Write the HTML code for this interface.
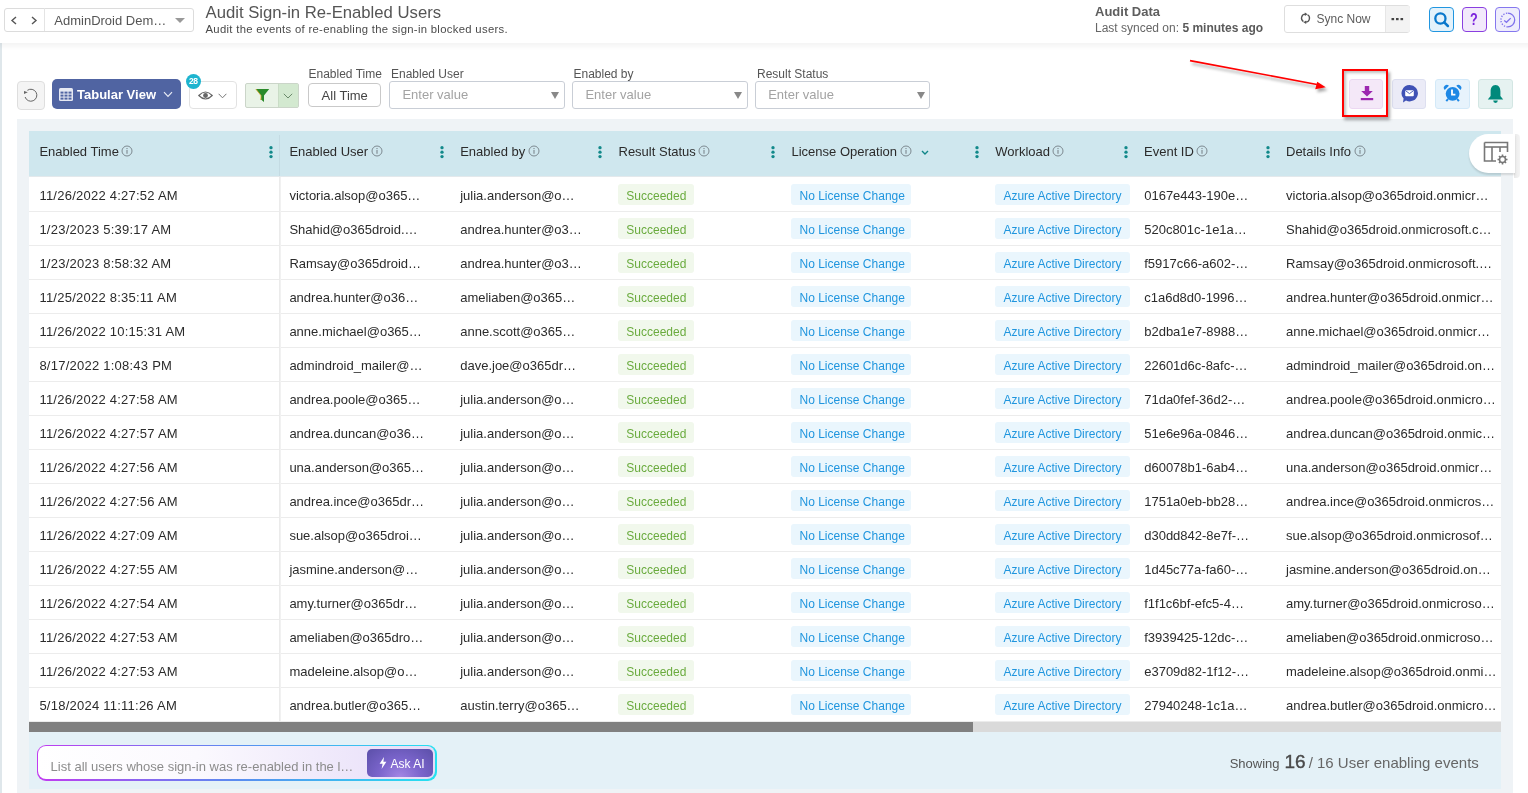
<!DOCTYPE html>
<html><head><meta charset="utf-8"><title>Audit Sign-in Re-Enabled Users</title>
<style>
html,body{margin:0;padding:0;width:1528px;height:793px;overflow:hidden;background:#fff;font-family:"Liberation Sans",sans-serif;}
.a{position:absolute;}
.t{position:absolute;white-space:nowrap;}
</style></head><body><div id="root" style="position:absolute;left:0;top:0;width:1528px;height:793px;will-change:transform">
<div class="a" style="left:0px;top:0px;width:1528px;height:43px;background:#fff;z-index:2"></div>
<div class="a" style="left:0px;top:43px;width:1528px;height:7px;background:linear-gradient(180deg,rgba(0,0,0,0.045),rgba(0,0,0,0.0));z-index:2"></div>
<div class="a" style="z-index:3;left:0;top:0;width:1528px;height:43px">
<div class="a" style="left:3.5px;top:7.5px;width:190.5px;height:24.5px;border:1px solid #dcdcdc;border-radius:3px;box-sizing:border-box"></div>
<div class="a" style="left:44px;top:8px;width:1px;height:23px;background:#e4e4e4"></div>
<svg class="a" style="left:10px;top:15px" width="30" height="11" viewBox="0 0 30 11"><path d="M6 2 L2 5.5 L6 9" fill="none" stroke="#555" stroke-width="1.4"/><path d="M22 2 L26 5.5 L22 9" fill="none" stroke="#555" stroke-width="1.4"/></svg>
<div class="t" style="left:54.3px;top:13.90px;font-size:13px;line-height:13px;color:#555;font-weight:400;">AdminDroid Dem…</div>
<svg class="a" style="left:175px;top:18px" width="10" height="5" viewBox="0 0 10 5"><path d="M0 0 L10 0 L5 5Z" fill="#999"/></svg>
<div class="t" style="left:205.5px;top:4.55px;font-size:16.7px;line-height:16.7px;color:#555;font-weight:400;">Audit Sign-in Re-Enabled Users</div>
<div class="t" style="left:205.5px;top:23.85px;font-size:11.3px;line-height:11.3px;color:#4a4a4a;font-weight:400;letter-spacing:0.31px">Audit the events of re-enabling the sign-in blocked users.</div>
<div class="t" style="left:1095px;top:4.70px;font-size:13px;line-height:13px;color:#5e5e5e;font-weight:700;">Audit Data</div>
<div class="t" style="left:1095px;top:22.00px;font-size:12px;line-height:12px;color:#666;font-weight:400;">Last synced on: <b style="color:#5a5a5a">5 minutes ago</b></div>
<div class="a" style="left:1283.6px;top:5.2px;width:126.40000000000009px;height:27.599999999999998px;border:1px solid #dedede;border-radius:3px;box-sizing:border-box;background:#fff"></div>
<div class="a" style="left:1384.7px;top:6.2px;width:24.299999999999955px;height:25.6px;background:#f3f3f3;border-left:1px solid #e6e6e6;border-radius:0 2px 2px 0"></div>
<svg class="a" style="left:1300px;top:12px" width="12" height="12" viewBox="0 0 12 12"><path d="M5.6 2.2 A4 4 0 0 0 3.4 9.6" fill="none" stroke="#555" stroke-width="1.3"/><path d="M5.4 10.2 A4 4 0 0 0 7.6 2.8" fill="none" stroke="#555" stroke-width="1.3"/><path d="M4.8 0.4 L4.8 4 L7.6 2.2Z" fill="#555"/><path d="M6.2 8.4 L6.2 12 L3.4 10.2Z" fill="#555"/></svg>
<div class="t" style="left:1316.5px;top:12.70px;font-size:12px;line-height:12px;color:#5c5c5c;font-weight:400;">Sync Now</div>
<svg class="a" style="left:1391px;top:17px" width="13" height="4" viewBox="0 0 13 4"><rect x="0.5" y="1" width="2.6" height="2.2" fill="#444"/><rect x="5" y="1" width="2.6" height="2.2" fill="#444"/><rect x="9.5" y="1" width="2.6" height="2.2" fill="#444"/></svg>
<div class="a" style="left:1429px;top:7.3px;width:25px;height:24.3px;background:#e4f2fb;border:1.5px solid #2196e0;border-radius:4px;box-sizing:border-box"></div>
<svg class="a" style="left:1433px;top:11px" width="17" height="17" viewBox="0 0 17 17"><circle cx="7.4" cy="7.5" r="5.1" fill="none" stroke="#0a78cc" stroke-width="2.3"/><path d="M11.2 11.3 L14.9 15" stroke="#0a78cc" stroke-width="2.5" stroke-linecap="round"/></svg>
<div class="a" style="left:1462px;top:7.3px;width:25px;height:24.3px;background:#f2e9fb;border:1.5px solid #8a3fe0;border-radius:4px;box-sizing:border-box"></div>
<div class="t" style="left:1469.8px;top:10.90px;font-size:17px;line-height:17px;color:#7a22dc;font-weight:700;transform:scaleX(0.74);transform-origin:left">?</div>
<div class="a" style="left:1495.2px;top:7.3px;width:24.799999999999955px;height:24.3px;background:#eeedfc;border:1.5px solid #8577ee;border-radius:4px;box-sizing:border-box"></div>
<svg class="a" style="left:1499px;top:11px" width="17" height="17" viewBox="0 0 17 17"><path d="M8.8 2.1 A6.9 6.9 0 0 1 8.8 15.9" fill="none" stroke="#7f72ec" stroke-width="1.3"/><path d="M8.8 15.9 A6.9 6.9 0 0 1 8.8 2.1" fill="none" stroke="#7f72ec" stroke-width="1.4" stroke-dasharray="1.3 1.5"/><path d="M5.2 9.4 L7.5 11.3 L11.7 7.1" fill="none" stroke="#7f72ec" stroke-width="1.3"/></svg>
</div>
<div class="a" style="left:0px;top:43px;width:2px;height:750px;background:#dfe7eb"></div>
<div class="a" style="left:16.5px;top:81px;width:28.0px;height:28.5px;background:#f4f4f4;border:1px solid #dedede;border-radius:4px;box-sizing:border-box"></div>
<svg class="a" style="left:22px;top:87px" width="17" height="17" viewBox="0 0 17 17"><path d="M3.1 10 A6 6 0 1 0 5.4 3.3" fill="none" stroke="#666" stroke-width="1"/><path d="M2 3.9 L2 6.9 L5.8 5.2Z" fill="#666"/></svg>
<div class="a" style="left:52px;top:79px;width:129px;height:30px;background:#5064a2;border-radius:5px"></div>
<svg class="a" style="left:59px;top:88px" width="14" height="13" viewBox="0 0 14 13"><rect x="0" y="0" width="14" height="13" rx="1.5" fill="#e6e9f3"/><g fill="#5064a2"><rect x="1.5" y="3.6" width="3" height="2"/><rect x="5.5" y="3.6" width="3" height="2"/><rect x="9.5" y="3.6" width="3" height="2"/><rect x="1.5" y="6.6" width="3" height="2"/><rect x="5.5" y="6.6" width="3" height="2"/><rect x="9.5" y="6.6" width="3" height="2"/><rect x="1.5" y="9.6" width="3" height="2"/><rect x="5.5" y="9.6" width="3" height="2"/><rect x="9.5" y="9.6" width="3" height="2"/></g></svg>
<div class="t" style="left:77px;top:88.20px;font-size:13px;line-height:13px;color:#fff;font-weight:700;">Tabular View</div>
<svg class="a" style="left:163px;top:91px" width="10" height="7" viewBox="0 0 10 7"><path d="M1 1.2 L5 5.4 L9 1.2" fill="none" stroke="#e8ebf5" stroke-width="1.2"/></svg>
<div class="a" style="left:189.3px;top:81.2px;width:47.69999999999999px;height:27.599999999999994px;background:#fff;border:1px solid #e2e2e2;border-radius:4px;box-sizing:border-box"></div>
<svg class="a" style="left:198px;top:91px" width="15" height="9" viewBox="0 0 15 9"><path d="M0.8 4.5 Q7.5 -2.5 14.2 4.5 Q7.5 11.5 0.8 4.5Z" fill="none" stroke="#666" stroke-width="1.2"/><circle cx="7.5" cy="4.5" r="2.4" fill="#666"/></svg>
<svg class="a" style="left:218px;top:93px" width="9" height="6" viewBox="0 0 9 6"><path d="M0.6 0.8 L4.5 4.8 L8.4 0.8" fill="none" stroke="#777" stroke-width="1"/></svg>
<div class="a" style="left:185.8px;top:73.7px;width:15px;height:15px;border-radius:50%;background:#1db4cf;color:#fff;font-size:8.5px;font-weight:700;line-height:15px;text-align:center;letter-spacing:-0.4px">28</div>
<div class="a" style="left:245.3px;top:83.1px;width:53.5px;height:24.700000000000003px;background:#e9f3e7;border:1px solid #cbd5c9;border-radius:2px;box-sizing:border-box"></div>
<div class="a" style="left:278.3px;top:84.1px;width:19.19999999999999px;height:22.5px;background:#d3e9d0;border-left:1px solid #c9dcc6"></div>
<svg class="a" style="left:255px;top:88px" width="15" height="15" viewBox="0 0 15 15"><path d="M0.8 1 L14.2 1 L9 7.5 L9 14 L6 11.5 L6 7.5Z" fill="#2a8a2a"/><path d="M0.8 1 L6 7.5 L6 11.5 L5 11" fill="none" stroke="#d9a62a" stroke-width="0.8"/></svg>
<svg class="a" style="left:283px;top:93px" width="10" height="6" viewBox="0 0 10 6"><path d="M0.8 0.8 L5 5 L9.2 0.8" fill="none" stroke="#6a8a6a" stroke-width="1"/></svg>
<div class="t" style="left:308.5px;top:67.60px;font-size:12px;line-height:12px;color:#555;font-weight:400;">Enabled Time</div>
<div class="t" style="left:391px;top:67.60px;font-size:12px;line-height:12px;color:#555;font-weight:400;">Enabled User</div>
<div class="t" style="left:573.5px;top:67.60px;font-size:12px;line-height:12px;color:#555;font-weight:400;">Enabled by</div>
<div class="t" style="left:757px;top:67.60px;font-size:12px;line-height:12px;color:#555;font-weight:400;">Result Status</div>
<div class="a" style="left:308.2px;top:82.5px;width:72.5px;height:24.799999999999997px;background:#fff;border:1px solid #c9c9c9;border-radius:4px;box-sizing:border-box"></div>
<div class="t" style="left:321.6px;top:88.50px;font-size:13px;line-height:13px;color:#444;font-weight:400;">All Time</div>
<div class="a" style="left:389.4px;top:81.3px;width:175.19999999999993px;height:27.700000000000003px;background:#fff;border:1px solid #c9ced6;border-radius:3px;box-sizing:border-box"></div>
<div class="t" style="left:402.4px;top:87.60px;font-size:13px;line-height:13px;color:#a3a3a3;font-weight:400;">Enter value</div>
<svg class="a" style="left:551.4px;top:92px" width="8" height="7" viewBox="0 0 8 7"><path d="M0 0 L8 0 L4 7Z" fill="#888"/></svg>
<div class="a" style="left:572.4px;top:81.3px;width:175.19999999999993px;height:27.700000000000003px;background:#fff;border:1px solid #c9ced6;border-radius:3px;box-sizing:border-box"></div>
<div class="t" style="left:585.4px;top:87.60px;font-size:13px;line-height:13px;color:#a3a3a3;font-weight:400;">Enter value</div>
<svg class="a" style="left:734.4px;top:92px" width="8" height="7" viewBox="0 0 8 7"><path d="M0 0 L8 0 L4 7Z" fill="#888"/></svg>
<div class="a" style="left:755.2px;top:81.3px;width:175.20000000000005px;height:27.700000000000003px;background:#fff;border:1px solid #c9ced6;border-radius:3px;box-sizing:border-box"></div>
<div class="t" style="left:768.2px;top:87.60px;font-size:13px;line-height:13px;color:#a3a3a3;font-weight:400;">Enter value</div>
<svg class="a" style="left:917.2px;top:92px" width="8" height="7" viewBox="0 0 8 7"><path d="M0 0 L8 0 L4 7Z" fill="#888"/></svg>
<div class="a" style="left:1349.2px;top:79.2px;width:34.299999999999955px;height:29.5px;background:#f4e8f8;border:1px solid #ecd8f2;border-radius:3px;box-sizing:border-box"></div>
<svg class="a" style="left:1360px;top:85px" width="14" height="16" viewBox="0 0 14 16"><path d="M4.8 1 L9.2 1 L9.2 6 L12.8 6 L7 11.6 L1.2 6 L4.8 6Z" fill="#9c27b0"/><rect x="0.8" y="13" width="12.4" height="2.2" fill="#9c27b0"/></svg>
<div class="a" style="left:1392.2px;top:79.2px;width:34.299999999999955px;height:29.5px;background:#ebebf7;border:1px solid #dddff0;border-radius:3px;box-sizing:border-box"></div>
<svg class="a" style="left:1400px;top:84px" width="19" height="19" viewBox="0 0 19 19"><path d="M9.5 1 A8.2 8.2 0 1 1 6 16.5 L3 18.6 L3.6 14.6 A8.2 8.2 0 0 1 9.5 1Z" fill="#3f51b5"/><rect x="5.2" y="6.2" width="8.6" height="6" rx="1" fill="#fff"/><path d="M5.4 6.6 L9.5 9.6 L13.6 6.6" fill="none" stroke="#3f51b5" stroke-width="0.9"/></svg>
<div class="a" style="left:1435.2px;top:79.2px;width:34.5px;height:29.5px;background:#e7f3fc;border:1px solid #d3e9f8;border-radius:3px;box-sizing:border-box"></div>
<svg class="a" style="left:1443px;top:84px" width="19" height="19" viewBox="0 0 19 19"><circle cx="9.6" cy="9.8" r="6.9" fill="#1e88e5"/><path d="M5.92 1.68 A3 3 0 0 0 1.68 5.92 Z" fill="#1e88e5"/><path d="M13.28 1.68 A3 3 0 0 1 17.52 5.92 Z" fill="#1e88e5"/><path d="M5 15 L3.3 17.2" stroke="#1e88e5" stroke-width="2"/><path d="M14.2 15 L15.9 17.2" stroke="#1e88e5" stroke-width="2"/><path d="M9 5.6 L9 10.6 L12.4 10.6" fill="none" stroke="#fff" stroke-width="1.8"/></svg>
<div class="a" style="left:1478.1px;top:79.2px;width:34.600000000000136px;height:29.5px;background:#e6f2f1;border:1px solid #d3e6e3;border-radius:3px;box-sizing:border-box"></div>
<svg class="a" style="left:1487px;top:84px" width="17" height="20" viewBox="0 0 17 20"><path d="M8.5 1 C5 1 3.6 4 3.6 7.5 L3.6 12 L0.8 15.6 L16.2 15.6 L13.4 12 L13.4 7.5 C13.4 4 12 1 8.5 1Z" fill="#00897b"/><path d="M6.2 16.6 A2.3 2.3 0 0 0 10.8 16.6Z" fill="#00897b"/></svg>
<div class="a" style="left:1342px;top:69px;width:46px;height:48px;border:2.6px solid #f00;box-sizing:border-box;box-shadow:2px 3px 3px rgba(0,0,0,0.35), inset 2px 2px 3px rgba(0,0,0,0.25);z-index:5"></div>
<svg class="a" style="left:1180px;top:50px;z-index:5" width="160" height="50" viewBox="0 0 160 50"><defs><filter id="sh" x="-10%" y="-50%" width="130%" height="200%"><feDropShadow dx="2" dy="3" stdDeviation="1.5" flood-color="#000" flood-opacity="0.35"/></filter></defs><g filter="url(#sh)"><path d="M10 10.6 L137 34.5" stroke="#f00" stroke-width="1.6"/><path d="M145.8 37.3 L135.2 39.2 L137.2 31.8Z" fill="#f00"/></g></svg>
<div class="a" style="left:17px;top:119px;width:1496px;height:674px;background:#eff3f6"></div>
<div class="a" style="left:29px;top:131px;width:1472px;height:45px;background:#cfe7ee"></div>
<div class="a" style="left:29px;top:176px;width:1472px;height:1px;background:#e3e9ec"></div>
<div class="a" style="left:29px;top:177px;width:1472px;height:545px;background:#fff"></div>
<div class="a" style="left:29px;top:211px;width:1472px;height:1px;background:#ececec"></div>
<div class="a" style="left:29px;top:245px;width:1472px;height:1px;background:#ececec"></div>
<div class="a" style="left:29px;top:279px;width:1472px;height:1px;background:#ececec"></div>
<div class="a" style="left:29px;top:313px;width:1472px;height:1px;background:#ececec"></div>
<div class="a" style="left:29px;top:347px;width:1472px;height:1px;background:#ececec"></div>
<div class="a" style="left:29px;top:381px;width:1472px;height:1px;background:#ececec"></div>
<div class="a" style="left:29px;top:415px;width:1472px;height:1px;background:#ececec"></div>
<div class="a" style="left:29px;top:449px;width:1472px;height:1px;background:#ececec"></div>
<div class="a" style="left:29px;top:483px;width:1472px;height:1px;background:#ececec"></div>
<div class="a" style="left:29px;top:517px;width:1472px;height:1px;background:#ececec"></div>
<div class="a" style="left:29px;top:551px;width:1472px;height:1px;background:#ececec"></div>
<div class="a" style="left:29px;top:585px;width:1472px;height:1px;background:#ececec"></div>
<div class="a" style="left:29px;top:619px;width:1472px;height:1px;background:#ececec"></div>
<div class="a" style="left:29px;top:653px;width:1472px;height:1px;background:#ececec"></div>
<div class="a" style="left:29px;top:687px;width:1472px;height:1px;background:#ececec"></div>
<div class="a" style="left:29px;top:721px;width:1472px;height:1px;background:#ececec"></div>
<div class="a" style="left:279px;top:135px;width:1px;height:41px;background:#c4dbe3"></div>
<div class="a" style="left:279px;top:177px;width:2px;height:544px;background:linear-gradient(90deg,#e8e8e8,#f4f4f4)"></div>
<div class="t" style="left:39.4px;top:144.80px;font-size:13px;line-height:13px;color:#2b2b2b;font-weight:400;">Enabled Time<svg style="vertical-align:-1.5px;margin-left:2.5px" width="12" height="12" viewBox="0 0 12 12"><circle cx="6" cy="6" r="5" fill="none" stroke="#7d8990" stroke-width="1"/><rect x="5.45" y="5" width="1.1" height="3.8" fill="#7d8990"/><rect x="5.45" y="3" width="1.1" height="1.1" fill="#7d8990"/></svg></div>
<svg class="a" style="left:268.9px;top:145px" width="4" height="14" viewBox="0 0 4 14"><circle cx="2" cy="2.7" r="1.65" fill="#12898a"/><circle cx="2" cy="7.2" r="1.65" fill="#12898a"/><circle cx="2" cy="11.6" r="1.65" fill="#12898a"/></svg>
<div class="t" style="left:289.4px;top:144.80px;font-size:13px;line-height:13px;color:#2b2b2b;font-weight:400;">Enabled User<svg style="vertical-align:-1.5px;margin-left:2.5px" width="12" height="12" viewBox="0 0 12 12"><circle cx="6" cy="6" r="5" fill="none" stroke="#7d8990" stroke-width="1"/><rect x="5.45" y="5" width="1.1" height="3.8" fill="#7d8990"/><rect x="5.45" y="3" width="1.1" height="1.1" fill="#7d8990"/></svg></div>
<svg class="a" style="left:440.1px;top:145px" width="4" height="14" viewBox="0 0 4 14"><circle cx="2" cy="2.7" r="1.65" fill="#12898a"/><circle cx="2" cy="7.2" r="1.65" fill="#12898a"/><circle cx="2" cy="11.6" r="1.65" fill="#12898a"/></svg>
<div class="t" style="left:460.2px;top:144.80px;font-size:13px;line-height:13px;color:#2b2b2b;font-weight:400;">Enabled by<svg style="vertical-align:-1.5px;margin-left:2.5px" width="12" height="12" viewBox="0 0 12 12"><circle cx="6" cy="6" r="5" fill="none" stroke="#7d8990" stroke-width="1"/><rect x="5.45" y="5" width="1.1" height="3.8" fill="#7d8990"/><rect x="5.45" y="3" width="1.1" height="1.1" fill="#7d8990"/></svg></div>
<svg class="a" style="left:597.5px;top:145px" width="4" height="14" viewBox="0 0 4 14"><circle cx="2" cy="2.7" r="1.65" fill="#12898a"/><circle cx="2" cy="7.2" r="1.65" fill="#12898a"/><circle cx="2" cy="11.6" r="1.65" fill="#12898a"/></svg>
<div class="t" style="left:618.5px;top:144.80px;font-size:13px;line-height:13px;color:#2b2b2b;font-weight:400;">Result Status<svg style="vertical-align:-1.5px;margin-left:2.5px" width="12" height="12" viewBox="0 0 12 12"><circle cx="6" cy="6" r="5" fill="none" stroke="#7d8990" stroke-width="1"/><rect x="5.45" y="5" width="1.1" height="3.8" fill="#7d8990"/><rect x="5.45" y="3" width="1.1" height="1.1" fill="#7d8990"/></svg></div>
<svg class="a" style="left:770.5px;top:145px" width="4" height="14" viewBox="0 0 4 14"><circle cx="2" cy="2.7" r="1.65" fill="#12898a"/><circle cx="2" cy="7.2" r="1.65" fill="#12898a"/><circle cx="2" cy="11.6" r="1.65" fill="#12898a"/></svg>
<div class="t" style="left:791.5px;top:144.80px;font-size:13px;line-height:13px;color:#2b2b2b;font-weight:400;">License Operation<svg style="vertical-align:-1.5px;margin-left:2.5px" width="12" height="12" viewBox="0 0 12 12"><circle cx="6" cy="6" r="5" fill="none" stroke="#7d8990" stroke-width="1"/><rect x="5.45" y="5" width="1.1" height="3.8" fill="#7d8990"/><rect x="5.45" y="3" width="1.1" height="1.1" fill="#7d8990"/></svg></div>
<svg class="a" style="left:974.6px;top:145px" width="4" height="14" viewBox="0 0 4 14"><circle cx="2" cy="2.7" r="1.65" fill="#12898a"/><circle cx="2" cy="7.2" r="1.65" fill="#12898a"/><circle cx="2" cy="11.6" r="1.65" fill="#12898a"/></svg>
<div class="t" style="left:995.3px;top:144.80px;font-size:13px;line-height:13px;color:#2b2b2b;font-weight:400;">Workload<svg style="vertical-align:-1.5px;margin-left:2.5px" width="12" height="12" viewBox="0 0 12 12"><circle cx="6" cy="6" r="5" fill="none" stroke="#7d8990" stroke-width="1"/><rect x="5.45" y="5" width="1.1" height="3.8" fill="#7d8990"/><rect x="5.45" y="3" width="1.1" height="1.1" fill="#7d8990"/></svg></div>
<svg class="a" style="left:1123.5px;top:145px" width="4" height="14" viewBox="0 0 4 14"><circle cx="2" cy="2.7" r="1.65" fill="#12898a"/><circle cx="2" cy="7.2" r="1.65" fill="#12898a"/><circle cx="2" cy="11.6" r="1.65" fill="#12898a"/></svg>
<div class="t" style="left:1144px;top:144.80px;font-size:13px;line-height:13px;color:#2b2b2b;font-weight:400;">Event ID<svg style="vertical-align:-1.5px;margin-left:2.5px" width="12" height="12" viewBox="0 0 12 12"><circle cx="6" cy="6" r="5" fill="none" stroke="#7d8990" stroke-width="1"/><rect x="5.45" y="5" width="1.1" height="3.8" fill="#7d8990"/><rect x="5.45" y="3" width="1.1" height="1.1" fill="#7d8990"/></svg></div>
<svg class="a" style="left:1265.5px;top:145px" width="4" height="14" viewBox="0 0 4 14"><circle cx="2" cy="2.7" r="1.65" fill="#12898a"/><circle cx="2" cy="7.2" r="1.65" fill="#12898a"/><circle cx="2" cy="11.6" r="1.65" fill="#12898a"/></svg>
<div class="t" style="left:1286px;top:144.80px;font-size:13px;line-height:13px;color:#2b2b2b;font-weight:400;">Details Info<svg style="vertical-align:-1.5px;margin-left:2.5px" width="12" height="12" viewBox="0 0 12 12"><circle cx="6" cy="6" r="5" fill="none" stroke="#7d8990" stroke-width="1"/><rect x="5.45" y="5" width="1.1" height="3.8" fill="#7d8990"/><rect x="5.45" y="3" width="1.1" height="1.1" fill="#7d8990"/></svg></div>
<svg class="a" style="left:921px;top:149.5px" width="8" height="5" viewBox="0 0 8 5"><path d="M1 1 L4 4 L7 1" fill="none" stroke="#0f8587" stroke-width="1.4"/></svg>
<div class="t" style="left:39.4px;top:188.80px;font-size:13px;line-height:13px;color:#2b2b2b;font-weight:400;letter-spacing:0.24px">11/26/2022 4:27:52 AM</div>
<div class="t" style="left:289.4px;top:188.80px;font-size:13px;line-height:13px;color:#2b2b2b;font-weight:400;">victoria.alsop@o365…</div>
<div class="t" style="left:460.2px;top:188.80px;font-size:13px;line-height:13px;color:#2b2b2b;font-weight:400;">julia.anderson@o…</div>
<div class="a" style="left:618px;top:184px;width:75.79999999999995px;height:20.69999999999999px;background:#f1f8ec;border-radius:3px"></div>
<div class="t" style="left:626.3px;top:189.80px;font-size:12px;line-height:12px;color:#6aab3e;font-weight:400;">Succeeded</div>
<div class="a" style="left:791.2px;top:184px;width:119.79999999999995px;height:20.69999999999999px;background:#eaf6fd;border-radius:3px"></div>
<div class="t" style="left:799.5px;top:189.80px;font-size:12px;line-height:12px;color:#1f95de;font-weight:400;">No License Change</div>
<div class="a" style="left:995px;top:184px;width:134.5px;height:20.69999999999999px;background:#eaf6fd;border-radius:3px"></div>
<div class="t" style="left:1003.4px;top:189.80px;font-size:12px;line-height:12px;color:#1f95de;font-weight:400;">Azure Active Directory</div>
<div class="t" style="left:1144.2px;top:188.80px;font-size:13px;line-height:13px;color:#2b2b2b;font-weight:400;">0167e443-190e…</div>
<div class="t" style="left:1286px;top:188.80px;font-size:13px;line-height:13px;color:#2b2b2b;font-weight:400;">victoria.alsop@o365droid.onmicr…</div>
<div class="t" style="left:39.4px;top:222.80px;font-size:13px;line-height:13px;color:#2b2b2b;font-weight:400;letter-spacing:0.24px">1/23/2023 5:39:17 AM</div>
<div class="t" style="left:289.4px;top:222.80px;font-size:13px;line-height:13px;color:#2b2b2b;font-weight:400;">Shahid@o365droid.…</div>
<div class="t" style="left:460.2px;top:222.80px;font-size:13px;line-height:13px;color:#2b2b2b;font-weight:400;">andrea.hunter@o3…</div>
<div class="a" style="left:618px;top:218px;width:75.79999999999995px;height:20.69999999999999px;background:#f1f8ec;border-radius:3px"></div>
<div class="t" style="left:626.3px;top:223.80px;font-size:12px;line-height:12px;color:#6aab3e;font-weight:400;">Succeeded</div>
<div class="a" style="left:791.2px;top:218px;width:119.79999999999995px;height:20.69999999999999px;background:#eaf6fd;border-radius:3px"></div>
<div class="t" style="left:799.5px;top:223.80px;font-size:12px;line-height:12px;color:#1f95de;font-weight:400;">No License Change</div>
<div class="a" style="left:995px;top:218px;width:134.5px;height:20.69999999999999px;background:#eaf6fd;border-radius:3px"></div>
<div class="t" style="left:1003.4px;top:223.80px;font-size:12px;line-height:12px;color:#1f95de;font-weight:400;">Azure Active Directory</div>
<div class="t" style="left:1144.2px;top:222.80px;font-size:13px;line-height:13px;color:#2b2b2b;font-weight:400;">520c801c-1e1a…</div>
<div class="t" style="left:1286px;top:222.80px;font-size:13px;line-height:13px;color:#2b2b2b;font-weight:400;">Shahid@o365droid.onmicrosoft.c…</div>
<div class="t" style="left:39.4px;top:256.80px;font-size:13px;line-height:13px;color:#2b2b2b;font-weight:400;letter-spacing:0.24px">1/23/2023 8:58:32 AM</div>
<div class="t" style="left:289.4px;top:256.80px;font-size:13px;line-height:13px;color:#2b2b2b;font-weight:400;">Ramsay@o365droid…</div>
<div class="t" style="left:460.2px;top:256.80px;font-size:13px;line-height:13px;color:#2b2b2b;font-weight:400;">andrea.hunter@o3…</div>
<div class="a" style="left:618px;top:252px;width:75.79999999999995px;height:20.69999999999999px;background:#f1f8ec;border-radius:3px"></div>
<div class="t" style="left:626.3px;top:257.80px;font-size:12px;line-height:12px;color:#6aab3e;font-weight:400;">Succeeded</div>
<div class="a" style="left:791.2px;top:252px;width:119.79999999999995px;height:20.69999999999999px;background:#eaf6fd;border-radius:3px"></div>
<div class="t" style="left:799.5px;top:257.80px;font-size:12px;line-height:12px;color:#1f95de;font-weight:400;">No License Change</div>
<div class="a" style="left:995px;top:252px;width:134.5px;height:20.69999999999999px;background:#eaf6fd;border-radius:3px"></div>
<div class="t" style="left:1003.4px;top:257.80px;font-size:12px;line-height:12px;color:#1f95de;font-weight:400;">Azure Active Directory</div>
<div class="t" style="left:1144.2px;top:256.80px;font-size:13px;line-height:13px;color:#2b2b2b;font-weight:400;">f5917c66-a602-…</div>
<div class="t" style="left:1286px;top:256.80px;font-size:13px;line-height:13px;color:#2b2b2b;font-weight:400;">Ramsay@o365droid.onmicrosoft.…</div>
<div class="t" style="left:39.4px;top:290.80px;font-size:13px;line-height:13px;color:#2b2b2b;font-weight:400;letter-spacing:0.24px">11/25/2022 8:35:11 AM</div>
<div class="t" style="left:289.4px;top:290.80px;font-size:13px;line-height:13px;color:#2b2b2b;font-weight:400;">andrea.hunter@o36…</div>
<div class="t" style="left:460.2px;top:290.80px;font-size:13px;line-height:13px;color:#2b2b2b;font-weight:400;">ameliaben@o365…</div>
<div class="a" style="left:618px;top:286px;width:75.79999999999995px;height:20.69999999999999px;background:#f1f8ec;border-radius:3px"></div>
<div class="t" style="left:626.3px;top:291.80px;font-size:12px;line-height:12px;color:#6aab3e;font-weight:400;">Succeeded</div>
<div class="a" style="left:791.2px;top:286px;width:119.79999999999995px;height:20.69999999999999px;background:#eaf6fd;border-radius:3px"></div>
<div class="t" style="left:799.5px;top:291.80px;font-size:12px;line-height:12px;color:#1f95de;font-weight:400;">No License Change</div>
<div class="a" style="left:995px;top:286px;width:134.5px;height:20.69999999999999px;background:#eaf6fd;border-radius:3px"></div>
<div class="t" style="left:1003.4px;top:291.80px;font-size:12px;line-height:12px;color:#1f95de;font-weight:400;">Azure Active Directory</div>
<div class="t" style="left:1144.2px;top:290.80px;font-size:13px;line-height:13px;color:#2b2b2b;font-weight:400;">c1a6d8d0-1996…</div>
<div class="t" style="left:1286px;top:290.80px;font-size:13px;line-height:13px;color:#2b2b2b;font-weight:400;">andrea.hunter@o365droid.onmicr…</div>
<div class="t" style="left:39.4px;top:324.80px;font-size:13px;line-height:13px;color:#2b2b2b;font-weight:400;letter-spacing:0.24px">11/26/2022 10:15:31 AM</div>
<div class="t" style="left:289.4px;top:324.80px;font-size:13px;line-height:13px;color:#2b2b2b;font-weight:400;">anne.michael@o365…</div>
<div class="t" style="left:460.2px;top:324.80px;font-size:13px;line-height:13px;color:#2b2b2b;font-weight:400;">anne.scott@o365…</div>
<div class="a" style="left:618px;top:320px;width:75.79999999999995px;height:20.69999999999999px;background:#f1f8ec;border-radius:3px"></div>
<div class="t" style="left:626.3px;top:325.80px;font-size:12px;line-height:12px;color:#6aab3e;font-weight:400;">Succeeded</div>
<div class="a" style="left:791.2px;top:320px;width:119.79999999999995px;height:20.69999999999999px;background:#eaf6fd;border-radius:3px"></div>
<div class="t" style="left:799.5px;top:325.80px;font-size:12px;line-height:12px;color:#1f95de;font-weight:400;">No License Change</div>
<div class="a" style="left:995px;top:320px;width:134.5px;height:20.69999999999999px;background:#eaf6fd;border-radius:3px"></div>
<div class="t" style="left:1003.4px;top:325.80px;font-size:12px;line-height:12px;color:#1f95de;font-weight:400;">Azure Active Directory</div>
<div class="t" style="left:1144.2px;top:324.80px;font-size:13px;line-height:13px;color:#2b2b2b;font-weight:400;">b2dba1e7-8988…</div>
<div class="t" style="left:1286px;top:324.80px;font-size:13px;line-height:13px;color:#2b2b2b;font-weight:400;">anne.michael@o365droid.onmicr…</div>
<div class="t" style="left:39.4px;top:358.80px;font-size:13px;line-height:13px;color:#2b2b2b;font-weight:400;letter-spacing:0.24px">8/17/2022 1:08:43 PM</div>
<div class="t" style="left:289.4px;top:358.80px;font-size:13px;line-height:13px;color:#2b2b2b;font-weight:400;">admindroid_mailer@…</div>
<div class="t" style="left:460.2px;top:358.80px;font-size:13px;line-height:13px;color:#2b2b2b;font-weight:400;">dave.joe@o365dr…</div>
<div class="a" style="left:618px;top:354px;width:75.79999999999995px;height:20.69999999999999px;background:#f1f8ec;border-radius:3px"></div>
<div class="t" style="left:626.3px;top:359.80px;font-size:12px;line-height:12px;color:#6aab3e;font-weight:400;">Succeeded</div>
<div class="a" style="left:791.2px;top:354px;width:119.79999999999995px;height:20.69999999999999px;background:#eaf6fd;border-radius:3px"></div>
<div class="t" style="left:799.5px;top:359.80px;font-size:12px;line-height:12px;color:#1f95de;font-weight:400;">No License Change</div>
<div class="a" style="left:995px;top:354px;width:134.5px;height:20.69999999999999px;background:#eaf6fd;border-radius:3px"></div>
<div class="t" style="left:1003.4px;top:359.80px;font-size:12px;line-height:12px;color:#1f95de;font-weight:400;">Azure Active Directory</div>
<div class="t" style="left:1144.2px;top:358.80px;font-size:13px;line-height:13px;color:#2b2b2b;font-weight:400;">22601d6c-8afc-…</div>
<div class="t" style="left:1286px;top:358.80px;font-size:13px;line-height:13px;color:#2b2b2b;font-weight:400;">admindroid_mailer@o365droid.on…</div>
<div class="t" style="left:39.4px;top:392.80px;font-size:13px;line-height:13px;color:#2b2b2b;font-weight:400;letter-spacing:0.24px">11/26/2022 4:27:58 AM</div>
<div class="t" style="left:289.4px;top:392.80px;font-size:13px;line-height:13px;color:#2b2b2b;font-weight:400;">andrea.poole@o365…</div>
<div class="t" style="left:460.2px;top:392.80px;font-size:13px;line-height:13px;color:#2b2b2b;font-weight:400;">julia.anderson@o…</div>
<div class="a" style="left:618px;top:388px;width:75.79999999999995px;height:20.69999999999999px;background:#f1f8ec;border-radius:3px"></div>
<div class="t" style="left:626.3px;top:393.80px;font-size:12px;line-height:12px;color:#6aab3e;font-weight:400;">Succeeded</div>
<div class="a" style="left:791.2px;top:388px;width:119.79999999999995px;height:20.69999999999999px;background:#eaf6fd;border-radius:3px"></div>
<div class="t" style="left:799.5px;top:393.80px;font-size:12px;line-height:12px;color:#1f95de;font-weight:400;">No License Change</div>
<div class="a" style="left:995px;top:388px;width:134.5px;height:20.69999999999999px;background:#eaf6fd;border-radius:3px"></div>
<div class="t" style="left:1003.4px;top:393.80px;font-size:12px;line-height:12px;color:#1f95de;font-weight:400;">Azure Active Directory</div>
<div class="t" style="left:1144.2px;top:392.80px;font-size:13px;line-height:13px;color:#2b2b2b;font-weight:400;">71da0fef-36d2-…</div>
<div class="t" style="left:1286px;top:392.80px;font-size:13px;line-height:13px;color:#2b2b2b;font-weight:400;">andrea.poole@o365droid.onmicro…</div>
<div class="t" style="left:39.4px;top:426.80px;font-size:13px;line-height:13px;color:#2b2b2b;font-weight:400;letter-spacing:0.24px">11/26/2022 4:27:57 AM</div>
<div class="t" style="left:289.4px;top:426.80px;font-size:13px;line-height:13px;color:#2b2b2b;font-weight:400;">andrea.duncan@o36…</div>
<div class="t" style="left:460.2px;top:426.80px;font-size:13px;line-height:13px;color:#2b2b2b;font-weight:400;">julia.anderson@o…</div>
<div class="a" style="left:618px;top:422px;width:75.79999999999995px;height:20.69999999999999px;background:#f1f8ec;border-radius:3px"></div>
<div class="t" style="left:626.3px;top:427.80px;font-size:12px;line-height:12px;color:#6aab3e;font-weight:400;">Succeeded</div>
<div class="a" style="left:791.2px;top:422px;width:119.79999999999995px;height:20.69999999999999px;background:#eaf6fd;border-radius:3px"></div>
<div class="t" style="left:799.5px;top:427.80px;font-size:12px;line-height:12px;color:#1f95de;font-weight:400;">No License Change</div>
<div class="a" style="left:995px;top:422px;width:134.5px;height:20.69999999999999px;background:#eaf6fd;border-radius:3px"></div>
<div class="t" style="left:1003.4px;top:427.80px;font-size:12px;line-height:12px;color:#1f95de;font-weight:400;">Azure Active Directory</div>
<div class="t" style="left:1144.2px;top:426.80px;font-size:13px;line-height:13px;color:#2b2b2b;font-weight:400;">51e6e96a-0846…</div>
<div class="t" style="left:1286px;top:426.80px;font-size:13px;line-height:13px;color:#2b2b2b;font-weight:400;">andrea.duncan@o365droid.onmic…</div>
<div class="t" style="left:39.4px;top:460.80px;font-size:13px;line-height:13px;color:#2b2b2b;font-weight:400;letter-spacing:0.24px">11/26/2022 4:27:56 AM</div>
<div class="t" style="left:289.4px;top:460.80px;font-size:13px;line-height:13px;color:#2b2b2b;font-weight:400;">una.anderson@o365…</div>
<div class="t" style="left:460.2px;top:460.80px;font-size:13px;line-height:13px;color:#2b2b2b;font-weight:400;">julia.anderson@o…</div>
<div class="a" style="left:618px;top:456px;width:75.79999999999995px;height:20.69999999999999px;background:#f1f8ec;border-radius:3px"></div>
<div class="t" style="left:626.3px;top:461.80px;font-size:12px;line-height:12px;color:#6aab3e;font-weight:400;">Succeeded</div>
<div class="a" style="left:791.2px;top:456px;width:119.79999999999995px;height:20.69999999999999px;background:#eaf6fd;border-radius:3px"></div>
<div class="t" style="left:799.5px;top:461.80px;font-size:12px;line-height:12px;color:#1f95de;font-weight:400;">No License Change</div>
<div class="a" style="left:995px;top:456px;width:134.5px;height:20.69999999999999px;background:#eaf6fd;border-radius:3px"></div>
<div class="t" style="left:1003.4px;top:461.80px;font-size:12px;line-height:12px;color:#1f95de;font-weight:400;">Azure Active Directory</div>
<div class="t" style="left:1144.2px;top:460.80px;font-size:13px;line-height:13px;color:#2b2b2b;font-weight:400;">d60078b1-6ab4…</div>
<div class="t" style="left:1286px;top:460.80px;font-size:13px;line-height:13px;color:#2b2b2b;font-weight:400;">una.anderson@o365droid.onmicr…</div>
<div class="t" style="left:39.4px;top:494.80px;font-size:13px;line-height:13px;color:#2b2b2b;font-weight:400;letter-spacing:0.24px">11/26/2022 4:27:56 AM</div>
<div class="t" style="left:289.4px;top:494.80px;font-size:13px;line-height:13px;color:#2b2b2b;font-weight:400;">andrea.ince@o365dr…</div>
<div class="t" style="left:460.2px;top:494.80px;font-size:13px;line-height:13px;color:#2b2b2b;font-weight:400;">julia.anderson@o…</div>
<div class="a" style="left:618px;top:490px;width:75.79999999999995px;height:20.69999999999999px;background:#f1f8ec;border-radius:3px"></div>
<div class="t" style="left:626.3px;top:495.80px;font-size:12px;line-height:12px;color:#6aab3e;font-weight:400;">Succeeded</div>
<div class="a" style="left:791.2px;top:490px;width:119.79999999999995px;height:20.69999999999999px;background:#eaf6fd;border-radius:3px"></div>
<div class="t" style="left:799.5px;top:495.80px;font-size:12px;line-height:12px;color:#1f95de;font-weight:400;">No License Change</div>
<div class="a" style="left:995px;top:490px;width:134.5px;height:20.69999999999999px;background:#eaf6fd;border-radius:3px"></div>
<div class="t" style="left:1003.4px;top:495.80px;font-size:12px;line-height:12px;color:#1f95de;font-weight:400;">Azure Active Directory</div>
<div class="t" style="left:1144.2px;top:494.80px;font-size:13px;line-height:13px;color:#2b2b2b;font-weight:400;">1751a0eb-bb28…</div>
<div class="t" style="left:1286px;top:494.80px;font-size:13px;line-height:13px;color:#2b2b2b;font-weight:400;">andrea.ince@o365droid.onmicros…</div>
<div class="t" style="left:39.4px;top:528.80px;font-size:13px;line-height:13px;color:#2b2b2b;font-weight:400;letter-spacing:0.24px">11/26/2022 4:27:09 AM</div>
<div class="t" style="left:289.4px;top:528.80px;font-size:13px;line-height:13px;color:#2b2b2b;font-weight:400;">sue.alsop@o365droi…</div>
<div class="t" style="left:460.2px;top:528.80px;font-size:13px;line-height:13px;color:#2b2b2b;font-weight:400;">julia.anderson@o…</div>
<div class="a" style="left:618px;top:524px;width:75.79999999999995px;height:20.700000000000045px;background:#f1f8ec;border-radius:3px"></div>
<div class="t" style="left:626.3px;top:529.80px;font-size:12px;line-height:12px;color:#6aab3e;font-weight:400;">Succeeded</div>
<div class="a" style="left:791.2px;top:524px;width:119.79999999999995px;height:20.700000000000045px;background:#eaf6fd;border-radius:3px"></div>
<div class="t" style="left:799.5px;top:529.80px;font-size:12px;line-height:12px;color:#1f95de;font-weight:400;">No License Change</div>
<div class="a" style="left:995px;top:524px;width:134.5px;height:20.700000000000045px;background:#eaf6fd;border-radius:3px"></div>
<div class="t" style="left:1003.4px;top:529.80px;font-size:12px;line-height:12px;color:#1f95de;font-weight:400;">Azure Active Directory</div>
<div class="t" style="left:1144.2px;top:528.80px;font-size:13px;line-height:13px;color:#2b2b2b;font-weight:400;">d30dd842-8e7f-…</div>
<div class="t" style="left:1286px;top:528.80px;font-size:13px;line-height:13px;color:#2b2b2b;font-weight:400;">sue.alsop@o365droid.onmicrosof…</div>
<div class="t" style="left:39.4px;top:562.80px;font-size:13px;line-height:13px;color:#2b2b2b;font-weight:400;letter-spacing:0.24px">11/26/2022 4:27:55 AM</div>
<div class="t" style="left:289.4px;top:562.80px;font-size:13px;line-height:13px;color:#2b2b2b;font-weight:400;">jasmine.anderson@…</div>
<div class="t" style="left:460.2px;top:562.80px;font-size:13px;line-height:13px;color:#2b2b2b;font-weight:400;">julia.anderson@o…</div>
<div class="a" style="left:618px;top:558px;width:75.79999999999995px;height:20.700000000000045px;background:#f1f8ec;border-radius:3px"></div>
<div class="t" style="left:626.3px;top:563.80px;font-size:12px;line-height:12px;color:#6aab3e;font-weight:400;">Succeeded</div>
<div class="a" style="left:791.2px;top:558px;width:119.79999999999995px;height:20.700000000000045px;background:#eaf6fd;border-radius:3px"></div>
<div class="t" style="left:799.5px;top:563.80px;font-size:12px;line-height:12px;color:#1f95de;font-weight:400;">No License Change</div>
<div class="a" style="left:995px;top:558px;width:134.5px;height:20.700000000000045px;background:#eaf6fd;border-radius:3px"></div>
<div class="t" style="left:1003.4px;top:563.80px;font-size:12px;line-height:12px;color:#1f95de;font-weight:400;">Azure Active Directory</div>
<div class="t" style="left:1144.2px;top:562.80px;font-size:13px;line-height:13px;color:#2b2b2b;font-weight:400;">1d45c77a-fa60-…</div>
<div class="t" style="left:1286px;top:562.80px;font-size:13px;line-height:13px;color:#2b2b2b;font-weight:400;">jasmine.anderson@o365droid.on…</div>
<div class="t" style="left:39.4px;top:596.80px;font-size:13px;line-height:13px;color:#2b2b2b;font-weight:400;letter-spacing:0.24px">11/26/2022 4:27:54 AM</div>
<div class="t" style="left:289.4px;top:596.80px;font-size:13px;line-height:13px;color:#2b2b2b;font-weight:400;">amy.turner@o365dr…</div>
<div class="t" style="left:460.2px;top:596.80px;font-size:13px;line-height:13px;color:#2b2b2b;font-weight:400;">julia.anderson@o…</div>
<div class="a" style="left:618px;top:592px;width:75.79999999999995px;height:20.700000000000045px;background:#f1f8ec;border-radius:3px"></div>
<div class="t" style="left:626.3px;top:597.80px;font-size:12px;line-height:12px;color:#6aab3e;font-weight:400;">Succeeded</div>
<div class="a" style="left:791.2px;top:592px;width:119.79999999999995px;height:20.700000000000045px;background:#eaf6fd;border-radius:3px"></div>
<div class="t" style="left:799.5px;top:597.80px;font-size:12px;line-height:12px;color:#1f95de;font-weight:400;">No License Change</div>
<div class="a" style="left:995px;top:592px;width:134.5px;height:20.700000000000045px;background:#eaf6fd;border-radius:3px"></div>
<div class="t" style="left:1003.4px;top:597.80px;font-size:12px;line-height:12px;color:#1f95de;font-weight:400;">Azure Active Directory</div>
<div class="t" style="left:1144.2px;top:596.80px;font-size:13px;line-height:13px;color:#2b2b2b;font-weight:400;">f1f1c6bf-efc5-4…</div>
<div class="t" style="left:1286px;top:596.80px;font-size:13px;line-height:13px;color:#2b2b2b;font-weight:400;">amy.turner@o365droid.onmicroso…</div>
<div class="t" style="left:39.4px;top:630.80px;font-size:13px;line-height:13px;color:#2b2b2b;font-weight:400;letter-spacing:0.24px">11/26/2022 4:27:53 AM</div>
<div class="t" style="left:289.4px;top:630.80px;font-size:13px;line-height:13px;color:#2b2b2b;font-weight:400;">ameliaben@o365dro…</div>
<div class="t" style="left:460.2px;top:630.80px;font-size:13px;line-height:13px;color:#2b2b2b;font-weight:400;">julia.anderson@o…</div>
<div class="a" style="left:618px;top:626px;width:75.79999999999995px;height:20.700000000000045px;background:#f1f8ec;border-radius:3px"></div>
<div class="t" style="left:626.3px;top:631.80px;font-size:12px;line-height:12px;color:#6aab3e;font-weight:400;">Succeeded</div>
<div class="a" style="left:791.2px;top:626px;width:119.79999999999995px;height:20.700000000000045px;background:#eaf6fd;border-radius:3px"></div>
<div class="t" style="left:799.5px;top:631.80px;font-size:12px;line-height:12px;color:#1f95de;font-weight:400;">No License Change</div>
<div class="a" style="left:995px;top:626px;width:134.5px;height:20.700000000000045px;background:#eaf6fd;border-radius:3px"></div>
<div class="t" style="left:1003.4px;top:631.80px;font-size:12px;line-height:12px;color:#1f95de;font-weight:400;">Azure Active Directory</div>
<div class="t" style="left:1144.2px;top:630.80px;font-size:13px;line-height:13px;color:#2b2b2b;font-weight:400;">f3939425-12dc-…</div>
<div class="t" style="left:1286px;top:630.80px;font-size:13px;line-height:13px;color:#2b2b2b;font-weight:400;">ameliaben@o365droid.onmicroso…</div>
<div class="t" style="left:39.4px;top:664.80px;font-size:13px;line-height:13px;color:#2b2b2b;font-weight:400;letter-spacing:0.24px">11/26/2022 4:27:53 AM</div>
<div class="t" style="left:289.4px;top:664.80px;font-size:13px;line-height:13px;color:#2b2b2b;font-weight:400;">madeleine.alsop@o…</div>
<div class="t" style="left:460.2px;top:664.80px;font-size:13px;line-height:13px;color:#2b2b2b;font-weight:400;">julia.anderson@o…</div>
<div class="a" style="left:618px;top:660px;width:75.79999999999995px;height:20.700000000000045px;background:#f1f8ec;border-radius:3px"></div>
<div class="t" style="left:626.3px;top:665.80px;font-size:12px;line-height:12px;color:#6aab3e;font-weight:400;">Succeeded</div>
<div class="a" style="left:791.2px;top:660px;width:119.79999999999995px;height:20.700000000000045px;background:#eaf6fd;border-radius:3px"></div>
<div class="t" style="left:799.5px;top:665.80px;font-size:12px;line-height:12px;color:#1f95de;font-weight:400;">No License Change</div>
<div class="a" style="left:995px;top:660px;width:134.5px;height:20.700000000000045px;background:#eaf6fd;border-radius:3px"></div>
<div class="t" style="left:1003.4px;top:665.80px;font-size:12px;line-height:12px;color:#1f95de;font-weight:400;">Azure Active Directory</div>
<div class="t" style="left:1144.2px;top:664.80px;font-size:13px;line-height:13px;color:#2b2b2b;font-weight:400;">e3709d82-1f12-…</div>
<div class="t" style="left:1286px;top:664.80px;font-size:13px;line-height:13px;color:#2b2b2b;font-weight:400;">madeleine.alsop@o365droid.onmi…</div>
<div class="t" style="left:39.4px;top:698.80px;font-size:13px;line-height:13px;color:#2b2b2b;font-weight:400;letter-spacing:0.24px">5/18/2024 11:11:26 AM</div>
<div class="t" style="left:289.4px;top:698.80px;font-size:13px;line-height:13px;color:#2b2b2b;font-weight:400;">andrea.butler@o365…</div>
<div class="t" style="left:460.2px;top:698.80px;font-size:13px;line-height:13px;color:#2b2b2b;font-weight:400;">austin.terry@o365…</div>
<div class="a" style="left:618px;top:694px;width:75.79999999999995px;height:20.700000000000045px;background:#f1f8ec;border-radius:3px"></div>
<div class="t" style="left:626.3px;top:699.80px;font-size:12px;line-height:12px;color:#6aab3e;font-weight:400;">Succeeded</div>
<div class="a" style="left:791.2px;top:694px;width:119.79999999999995px;height:20.700000000000045px;background:#eaf6fd;border-radius:3px"></div>
<div class="t" style="left:799.5px;top:699.80px;font-size:12px;line-height:12px;color:#1f95de;font-weight:400;">No License Change</div>
<div class="a" style="left:995px;top:694px;width:134.5px;height:20.700000000000045px;background:#eaf6fd;border-radius:3px"></div>
<div class="t" style="left:1003.4px;top:699.80px;font-size:12px;line-height:12px;color:#1f95de;font-weight:400;">Azure Active Directory</div>
<div class="t" style="left:1144.2px;top:698.80px;font-size:13px;line-height:13px;color:#2b2b2b;font-weight:400;">27940248-1c1a…</div>
<div class="t" style="left:1286px;top:698.80px;font-size:13px;line-height:13px;color:#2b2b2b;font-weight:400;">andrea.butler@o365droid.onmicro…</div>
<div class="a" style="left:1514px;top:134px;width:6px;height:44px;background:linear-gradient(90deg,#e9e9e9,#f4f4f4);border-radius:0 4px 4px 0;z-index:3"></div>
<div class="a" style="left:1469px;top:134px;width:46px;height:39px;background:#fff;border-radius:20px 0 0 20px;box-shadow:0px 2px 2px rgba(0,0,0,0.12);z-index:4"></div>
<svg class="a" style="left:1483px;top:141px;z-index:5" width="26" height="25" viewBox="0 0 26 25"><path d="M1.5 1.5 L24.5 1.5 L24.5 11" fill="none" stroke="#777" stroke-width="1.6"/><path d="M1.5 1.5 L1.5 20 L13 20" fill="none" stroke="#777" stroke-width="1.6"/><path d="M1.5 6 L24.5 6" stroke="#777" stroke-width="1.6"/><path d="M9 6 L9 20" stroke="#777" stroke-width="1.6"/><path d="M17 6 L17 11" stroke="#777" stroke-width="1.6"/><circle cx="19.5" cy="18.5" r="3" fill="none" stroke="#777" stroke-width="1.6"/><g stroke="#777" stroke-width="1.6"><path d="M19.5 13.5 L19.5 15"/><path d="M19.5 22 L19.5 23.5"/><path d="M14.5 18.5 L16 18.5"/><path d="M23 18.5 L24.5 18.5"/><path d="M16 15 L17 16"/><path d="M22 21 L23 22"/><path d="M23 15 L22 16"/><path d="M17 21 L16 22"/></g></svg>
<div class="a" style="left:29px;top:722px;width:1472px;height:10px;background:#dadada"></div>
<div class="a" style="left:29px;top:722px;width:944px;height:10px;background:#808080"></div>
<div class="a" style="left:29px;top:732px;width:1472px;height:56.5px;background:#e4f1f7"></div>
<div class="a" style="left:37.3px;top:745px;width:399.3px;height:35.5px;border-radius:9px;background:linear-gradient(90deg,#c13bf0,#5a8cf0 50%,#25e2f0);"></div>
<div class="a" style="left:38.4px;top:746.1px;width:397.1px;height:33.3px;border-radius:8px;background:linear-gradient(90deg,#ffffff 0%,#fbf9fe 40%,#e6dcf8 100%);"></div>
<div class="t" style="left:50.6px;top:759.50px;font-size:13px;line-height:13px;color:#8c8c8c;font-weight:400;">List all users whose sign-in was re-enabled in the l…</div>
<div class="a" style="left:367px;top:749px;width:66px;height:28px;border-radius:5px;background:radial-gradient(ellipse at 50% 100%,#a386e4 0%,#7b65cc 45%,#5b4fa8 100%);"></div>
<svg class="a" style="left:378.5px;top:756.5px" width="8" height="12" viewBox="0 0 8 12"><path d="M5 0 L0.6 6.8 L3.6 6.8 L2.6 12 L7.4 4.8 L4.4 4.8Z" fill="#fff"/></svg>
<div class="t" style="left:390.6px;top:758.00px;font-size:12px;line-height:12px;color:#fff;font-weight:400;">Ask AI</div>
<div class="t" style="left:1229.7px;top:757.00px;font-size:13px;line-height:13px;color:#555;font-weight:400;">Showing</div>
<div class="t" style="left:1284.5px;top:752.00px;font-size:19px;line-height:19px;color:#4a4a4a;font-weight:400;-webkit-text-stroke:0.4px #4a4a4a">16</div>
<div class="t" style="left:1308.7px;top:755.00px;font-size:15px;line-height:15px;color:#666;font-weight:400;">/ 16 User enabling events</div>
</div></body></html>
